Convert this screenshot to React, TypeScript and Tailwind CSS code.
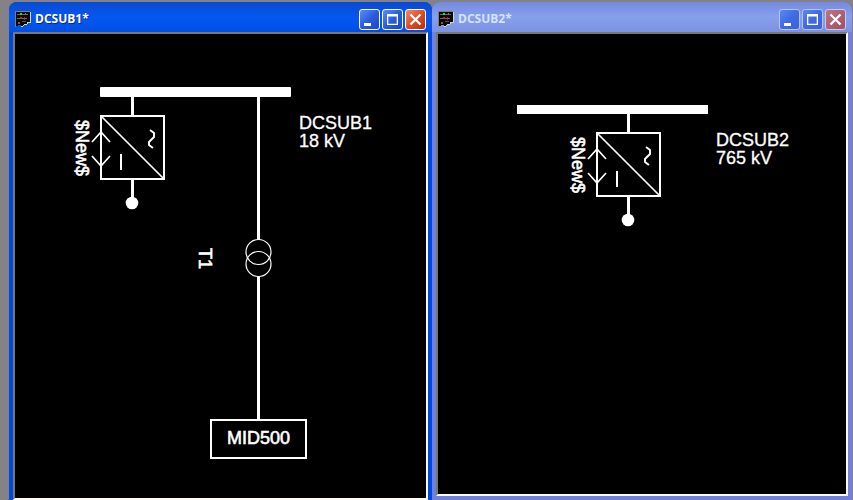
import type { ReactNode } from "react";

function DiagramIcon() {
  return (
    <svg width="16" height="16" viewBox="0 0 16 16" shapeRendering="crispEdges" aria-hidden="true">
      <path d="M0 0h15v11h-2l-1 2h-2l-2 2H6l-1-1H3l-1 1H0z" fill="#0a0a0a" />
      <path d="M0 15.5V.5h15" fill="none" stroke="#847c68" />
      <path d="M15 1v10h-2l-1 2h-2l-2 2H6" fill="none" stroke="#d8d4c8" />
      <path d="M2 3.5h11M2 7.5h10" stroke="#6b6b6b" />
      <path d="M5 2h2v2H5z" fill="#00f030" />
      <path d="M10 2h1v2h-1z" fill="#40a050" />
      <path d="M5 6h2v2H5z" fill="#f01010" />
      <path d="M9 6h1v3H9z" fill="#a03030" />
      <path d="M3 11h2v2H3z" fill="#806818" />
      <path d="M7 10h4v1H7z" fill="#555" />
    </svg>
  );
}

type ButtonKind = "minimize" | "maximize" | "close";

const glyphs: Record<ButtonKind, ReactNode> = {
  minimize: <path d="M4 13h7v3H4z" fill="#fff" />,
  maximize: <path d="M4 4h11v11H4zM5.300 6.500v7.200h8.400V6.500z" fill="#fff" fillRule="evenodd" />,
  close: <path d="M4.500 4.500l10 10M14.500 4.500l-10 10" stroke="#fff" strokeWidth="2.300" />,
};

function CaptionButton({ kind, active }: { kind: ButtonKind; active: boolean }) {
  const color =
    kind === "close"
      ? active
        ? "border-white bg-linear-to-br from-[#ee8a68] via-[#dc4c25] to-[#b8300c]"
        : "border-[#c3cdf2] bg-linear-to-br from-[#b87888] via-[#b06070] to-[#a05068]"
      : active
        ? "border-white bg-linear-to-br from-[#5c8cf4] via-[#2a5cde] to-[#1a48c8]"
        : "border-[#b5c5f5] bg-linear-to-br from-[#5c86ee] via-[#3f6ae4] to-[#3c62dc]";
  return (
    <button type="button" aria-label={kind} className={`flex size-[21px] items-center justify-center rounded-[3px] border ${color}`}>
      <svg width="19" height="19" viewBox="0 0 19 19" aria-hidden="true" className="shrink-0">
        {glyphs[kind]}
      </svg>
    </button>
  );
}

function Window({ title, active, children }: { title: string; active: boolean; children: ReactNode }) {
  const frame = active ? "-mb-1 border-[#0048e4]" : "border-[#7080dc]";
  const bar = active
    ? "bg-linear-to-b from-[#0a4ad0] via-[#0458f0] to-[#0050e4]"
    : "bg-linear-to-b from-[#7689e0] via-[#86a0ec] to-[#7c92e4]";
  const edge = active ? "bg-[#0038c8]" : "bg-[#5a60c0]";
  return (
    <section className={`flex min-w-0 flex-col overflow-hidden rounded-t-lg ${edge}`}>
      <header className={`flex h-[30px] shrink-0 items-center gap-1 px-1.5 pt-1 ${bar}`}>
        <DiagramIcon />
        <h1
          className={`flex-1 truncate font-['Open_Sans',sans-serif] text-xs font-bold ${
            active ? "text-white [text-shadow:1px_1px_#0a2a88]" : "text-[#d6e2fa]"
          }`}
        >
          {title}
        </h1>
        <div className="flex gap-0.5">
          <CaptionButton kind="minimize" active={active} />
          <CaptionButton kind="maximize" active={active} />
          <CaptionButton kind="close" active={active} />
        </div>
      </header>
      <div className={`flex min-h-0 flex-1 border-x-4 border-b-4 ${frame}`}>
        <div className="min-w-0 flex-1 overflow-hidden border-2 border-t-[#77786c] border-r-[#fffdf2] border-b-[#fffdf2] border-l-[#77786c] bg-black">
          {children}
        </div>
      </div>
    </section>
  );
}

interface LabelProps {
  x: number;
  y: number;
  turned?: boolean;
  heavy?: boolean;
  children: ReactNode;
}

function Label({ x, y, turned, heavy, children }: LabelProps) {
  return (
    <text
      transform={`translate(${x} ${y})${turned ? " rotate(90)" : ""}`}
      fill="#fff"
      stroke="#fff"
      strokeWidth={heavy ? 0.6 : 0.3}
      className="font-['Liberation_Sans',Arial,sans-serif] text-[18px]"
    >
      {children}
    </text>
  );
}

function BusLabel({ x, y, name, voltage }: { x: number; y: number; name: string; voltage: string }) {
  return (
    <Label x={x} y={y}>
      {name}
      <tspan x="0" dy="18">
        {voltage}
      </tspan>
    </Label>
  );
}

function Converter({ x, y }: { x: number; y: number }) {
  return (
    <g transform={`translate(${x} ${y})`} fill="none" stroke="#fff">
      <path d="M31.500-20V0M31.500 64v19" strokeWidth="3" />
      <rect x="0" y="0" width="63" height="63" strokeWidth="2" />
      <path d="M0 0l63 63" strokeWidth="1.700" />
      <path d="M-9 26L0 16l9 10M-9 40L0 50l9-10" strokeWidth="1.700" />
      <path d="M20 38v16" strokeWidth="2" />
      <path d="M49 14l4 3v4l-5 5v3l4 3" strokeWidth="1.900" />
      <circle cx="31" cy="87" r="6.300" fill="#fff" stroke="none" />
      <Label x={-25} y={4} turned heavy>
        $New$
      </Label>
    </g>
  );
}

function FirstDiagram() {
  return (
    <svg width="411" height="463" viewBox="15 34 411 463" role="img" aria-label="DCSUB1">
      <rect x="100" y="87" width="191" height="10" rx="1" fill="#fff" />
      <Converter x={101} y={116} />
      <path d="M258.500 97V240M258.500 277V420" stroke="#fff" strokeWidth="3" />
      <g fill="none" stroke="#fff" strokeWidth="1.200">
        <circle cx="258.500" cy="252" r="12.500" />
        <circle cx="258.500" cy="264" r="12.500" />
      </g>
      <rect x="211" y="420" width="95" height="38" fill="none" stroke="#fff" strokeWidth="2" />
      <BusLabel x={299} y={129} name="DCSUB1" voltage="18 kV" />
      <Label x={199} y={248} turned heavy>
        T1
      </Label>
      <Label x={227} y={444} heavy>
        MID500
      </Label>
    </svg>
  );
}

function SecondDiagram() {
  return (
    <svg width="408" height="460" viewBox="438 34 408 460" role="img" aria-label="DCSUB2">
      <rect x="517" y="105" width="191" height="9" fill="#fff" />
      <Converter x={597} y={133} />
      <BusLabel x={716} y={146} name="DCSUB2" voltage="765 kV" />
    </svg>
  );
}

export default function App() {
  return (
    <main className="grid h-screen grid-cols-[423fr_420fr] grid-rows-[minmax(0,1fr)] overflow-hidden bg-[#848284] pt-0.5 pr-px pl-[9px]">
      <Window title="DCSUB1*" active>
        <FirstDiagram />
      </Window>
      <Window title="DCSUB2*" active={false}>
        <SecondDiagram />
      </Window>
    </main>
  );
}
